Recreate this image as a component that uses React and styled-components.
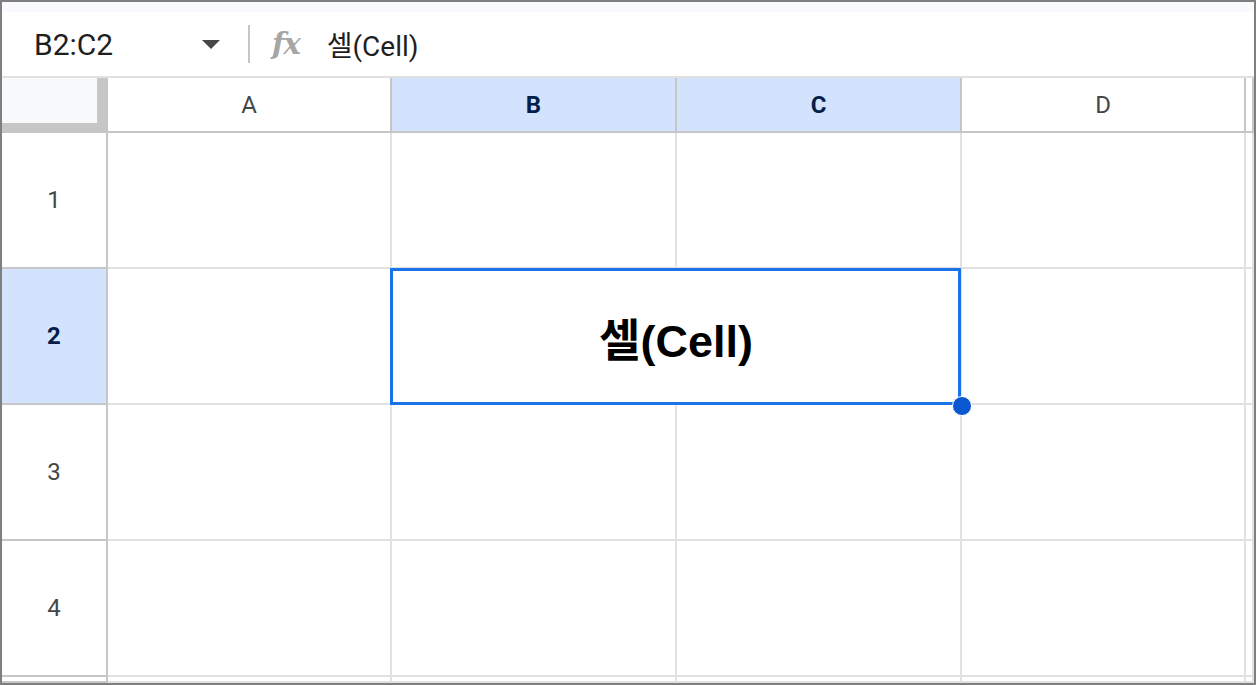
import styled, { createGlobalStyle } from 'styled-components';

const GlobalStyle = createGlobalStyle`
  html, body {
    margin: 0;
    padding: 0;
    background: #ffffff;
  }
  * {
    box-sizing: border-box;
  }
`;

const UI_FONT = `Roboto, "Liberation Sans", "Noto Sans CJK KR", sans-serif`;
const CELL_FONT = `"Liberation Sans", Arial, "Noto Sans CJK KR", sans-serif`;

const HEADER_LINE = '#c4c7c5';
const GRID_LINE = '#e1e1e1';
const SELECT_BG = '#d3e3fd';

const Frame = styled.div`
  width: 1256px;
  height: 685px;
  border: 2px solid #7f7f7f;
  display: flex;
  flex-direction: column;
  overflow: hidden;
  background: #ffffff;
`;

const FormulaBar = styled.div`
  flex: none;
  height: 76px;
  display: flex;
  flex-direction: column;
  border-bottom: 2px solid ${GRID_LINE};
`;

const TopStrip = styled.div`
  height: 10px;
  background: #f8fafd;
`;

const BarRow = styled.div`
  flex: 1;
  display: flex;
  align-items: center;
`;

const NameBox = styled.div`
  width: 230px;
  padding-left: 32px;
  padding-right: 12px;
  display: flex;
  align-items: center;
  font-family: ${UI_FONT};
  font-size: 30px;
  color: #1f1f1f;
`;

const NameText = styled.span`
  flex: 1;
`;

const Caret = styled.span`
  width: 0;
  height: 0;
  border-left: 9px solid transparent;
  border-right: 9px solid transparent;
  border-top: 9px solid #444746;
`;

const Separator = styled.div`
  width: 2px;
  height: 38px;
  background: #c7c7c7;
  margin: 0 22px 0 16px;
`;

const FxMark = styled.span`
  font-family: "DejaVu Serif", "Liberation Serif", serif;
  font-style: italic;
  font-size: 29px;
  font-weight: 600;
  color: #a6a6a6;
  letter-spacing: -1px;
  margin-right: 27px;
`;

const FormulaText = styled.span`
  font-family: ${UI_FONT};
  font-size: 28px;
  color: #1f1f1f;
`;

const Sheet = styled.div`
  flex: 1;
  display: grid;
  grid-template-columns: 106px 284px 285px 285px 284px 1fr;
  grid-template-rows: 55px repeat(4, 136px) 1fr;
  overflow: hidden;
`;

const Corner = styled.div`
  background: #f8f9fa;
  border-right: 2px solid ${HEADER_LINE};
  border-bottom: 2px solid ${HEADER_LINE};
  box-shadow: inset -9px -8px 0 0 #c6c6c6;
`;

const Header = styled.div`
  display: flex;
  align-items: center;
  justify-content: center;
  overflow: hidden;
  font-family: ${UI_FONT};
  font-size: 24px;
  font-weight: ${p => (p.$active ? 700 : 400)};
  color: ${p => (p.$active ? '#041e49' : '#444746')};
  background: ${p => (p.$active ? SELECT_BG : '#ffffff')};
  border-right: 2px solid ${HEADER_LINE};
  border-bottom: 2px solid ${HEADER_LINE};
`;

const Cell = styled.div`
  background: #ffffff;
  border-right: 2px solid ${GRID_LINE};
  border-bottom: 2px solid ${GRID_LINE};
`;

const MergedCell = styled(Cell)`
  grid-column: span 2;
  position: relative;
  display: flex;
  align-items: center;
  justify-content: center;
  padding-top: 2px;
  font-family: ${CELL_FONT};
  font-size: 45px;
  font-weight: 700;
  color: #000000;
`;

// offsets are from the padding box, so they reach over the cell's own borders
const Selection = styled.div`
  position: absolute;
  top: -1px;
  left: -2px;
  right: -1px;
  bottom: -2px;
  border: 3px solid #1a73e8;
  pointer-events: none;
`;

const FillHandle = styled.div`
  position: absolute;
  right: -12px;
  bottom: -13px;
  width: 20px;
  height: 20px;
  border-radius: 50%;
  background: #0b57d0;
  border: 1.5px solid #ffffff;
  z-index: 2;
`;

const columns = [
  { id: 'A', active: false },
  { id: 'B', active: true },
  { id: 'C', active: true },
  { id: 'D', active: false },
  { id: 'E', active: false },
];

// last row is only a sliver at the bottom edge, so no label is shown
const rows = [1, 2, 3, 4, 5];

const SheetRow = ({ n }) => {
  if (n === 2) {
    return (
      <>
        <Header $active>{n}</Header>
        <Cell />
        <MergedCell>
          셀(Cell)
          <Selection />
          <FillHandle />
        </MergedCell>
        <Cell />
        <Cell />
      </>
    );
  }
  return (
    <>
      <Header>{n < 5 ? n : ''}</Header>
      {columns.map(c => (
        <Cell key={c.id} />
      ))}
    </>
  );
};

export default function App() {
  return (
    <>
      <GlobalStyle />
      <Frame>
        <FormulaBar>
          <TopStrip />
          <BarRow>
            <NameBox>
              <NameText>B2:C2</NameText>
              <Caret />
            </NameBox>
            <Separator />
            <FxMark>fx</FxMark>
            <FormulaText>셀(Cell)</FormulaText>
          </BarRow>
        </FormulaBar>
        <Sheet>
          <Corner />
          {columns.map(c => (
            <Header key={c.id} $active={c.active}>
              {c.id === 'E' ? '' : c.id}
            </Header>
          ))}
          {rows.map(n => (
            <SheetRow key={n} n={n} />
          ))}
        </Sheet>
      </Frame>
    </>
  );
}
